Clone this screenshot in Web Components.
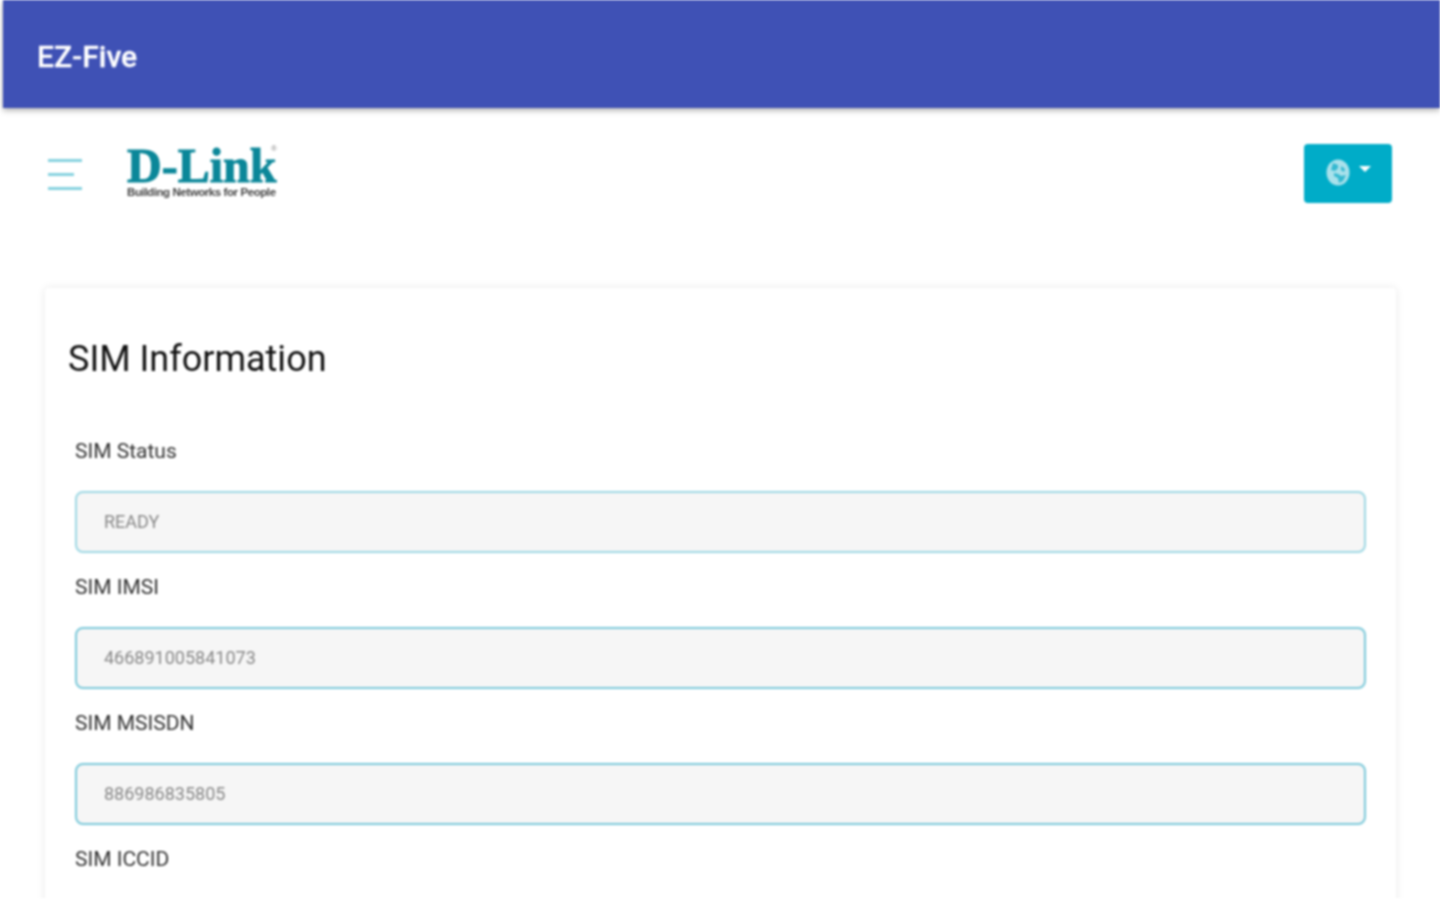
<!DOCTYPE html>
<html lang="en">
<head>
<meta charset="utf-8">
<title>EZ-Five</title>
<style>
  html { height: 100%; overflow: hidden; background: #fff; }
  /* the reference capture stops just short of the window bottom and is soft, upscaled */
  body { margin: 0; height: 898px; overflow: hidden; background: #fff; font-family: Roboto, "Liberation Sans", sans-serif; filter: blur(.8px); }
</style>
</head>
<body>
<app-header>EZ-Five</app-header>
<app-toolbar></app-toolbar>
<info-card heading="SIM Information">
  <info-field label="SIM Status" value="READY" style="--line:#9ed8e4"></info-field>
  <info-field label="SIM IMSI" value="466891005841073"></info-field>
  <info-field label="SIM MSISDN" value="886986835805"></info-field>
  <info-field label="SIM ICCID" value=""></info-field>
</info-card>

<script>
/* top bar */
class AppHeader extends HTMLElement {
  constructor() {
    super();
    this.attachShadow({ mode: 'open' }).innerHTML = `
      <style>
        :host {
          display: flex;
          align-items: center;
          height: 108px;
          margin-left: 3px;
          padding: 4px 0 0 34px;
          box-sizing: border-box;
          background: #3f51b5;
          color: #fff;
          font: 500 30px Roboto, sans-serif;
          -webkit-text-stroke: .3px #fff;
          box-shadow: 0 2px 6px rgba(0,0,0,.35);
          position: relative;
        }
      </style>
      <slot></slot>`;
  }
}

/* hamburger, logo and language button */
class AppToolbar extends HTMLElement {
  constructor() {
    super();
    this.attachShadow({ mode: 'open' }).innerHTML = `
      <style>
        :host {
          display: flex;
          align-items: flex-start;
          height: 180px;
          padding: 36px 48px 0 48px;
          box-sizing: border-box;
        }
        .burger { display: flex; flex-direction: column; gap: 11px; width: 34px; margin-top: 15px; }
        .burger i { display: block; height: 3px; background: #86d2df; }
        .burger i:nth-child(2) { width: 26px; }
        .logo { position: relative; margin: 2px 0 0 45px; width: 150px; color: #0b8799; }
        .word { font: 700 48px/40px "Liberation Serif", serif; -webkit-text-stroke: 1px #0b8799; white-space: nowrap; }
        .tag { font: 700 11.5px/13px "Liberation Sans", sans-serif; color: #444; white-space: nowrap; letter-spacing: -.42px; }
        .reg { position: absolute; right: 0; top: -2px; font: 400 8px/10px "Liberation Sans", sans-serif; color: #888; }
        .lang {
          margin-left: auto;
          width: 88px;
          height: 59px;
          border-radius: 4px;
          background: #00acc8;
          display: flex;
          align-items: center;
          justify-content: center;
          gap: 9px;
          padding-bottom: 2px;
          box-sizing: border-box;
        }
        .caret { width: 0; height: 0; border: 6px solid transparent; border-top-color: #fff; border-bottom: 0; margin-bottom: 7px; }
      </style>
      <div class="burger"><i></i><i></i><i></i></div>
      <div class="logo">
        <div class="word">D-Link</div>
        <div class="tag">Building Networks for People</div>
        <span class="reg">®</span>
      </div>
      <div class="lang">
        <svg width="24" height="27" viewBox="0 0 24 27">
          <ellipse cx="12" cy="13.5" rx="11.5" ry="13" fill="#a9e1eb"/>
          <path d="M7 4l5 2 0 3-3 3-4-1zM15 7l4 3-1 3-3-2zM8 14l4 1 3 2 5-1-3 6-4 2-1-5-4-2z" fill="#35b9d0"/>
        </svg>
        <div class="caret"></div>
      </div>`;
  }
}

/* white card with the heading and its fields */
class InfoCard extends HTMLElement {
  constructor() {
    super();
    this.attachShadow({ mode: 'open' }).innerHTML = `
      <style>
        :host {
          display: block;
          margin: 0 44px 0 45px;
          padding: 47px 30px 0 23px;
          background: #fff;
          border-radius: 4px;
          box-shadow: 0 0 10px rgba(0,0,0,.09);
          height: 700px;
          box-sizing: border-box;
        }
        h2 { margin: 0 0 55px; font: 400 36px/48px Roboto, sans-serif; color: #111; }
        .fields { padding-left: 7px; }
      </style>
      <h2></h2>
      <div class="fields"><slot></slot></div>`;
    this.shadowRoot.querySelector('h2').textContent = this.getAttribute('heading');
  }
}

/* one label with a read only box */
class InfoField extends HTMLElement {
  constructor() {
    super();
    this.attachShadow({ mode: 'open' }).innerHTML = `
      <style>
        :host { display: block; height: 136px; }
        label { display: block; height: 53px; font: 400 21px/26px Roboto, sans-serif; color: #333; }
        .box {
          height: 62px;
          box-sizing: border-box;
          border: 2px solid var(--line, #7cc9da);
          border-radius: 8px;
          background: #f6f6f6;
          padding: 0 27px 2px;
          display: flex;
          align-items: center;
          font: 400 18px Roboto, sans-serif;
          color: #888;
        }
      </style>
      <label></label>
      <div class="box"></div>`;
    this.shadowRoot.querySelector('label').textContent = this.getAttribute('label');
    this.shadowRoot.querySelector('.box').textContent = this.getAttribute('value');
  }
}

customElements.define('app-header', AppHeader);
customElements.define('app-toolbar', AppToolbar);
customElements.define('info-card', InfoCard);
customElements.define('info-field', InfoField);
</script>
</body>
</html>
